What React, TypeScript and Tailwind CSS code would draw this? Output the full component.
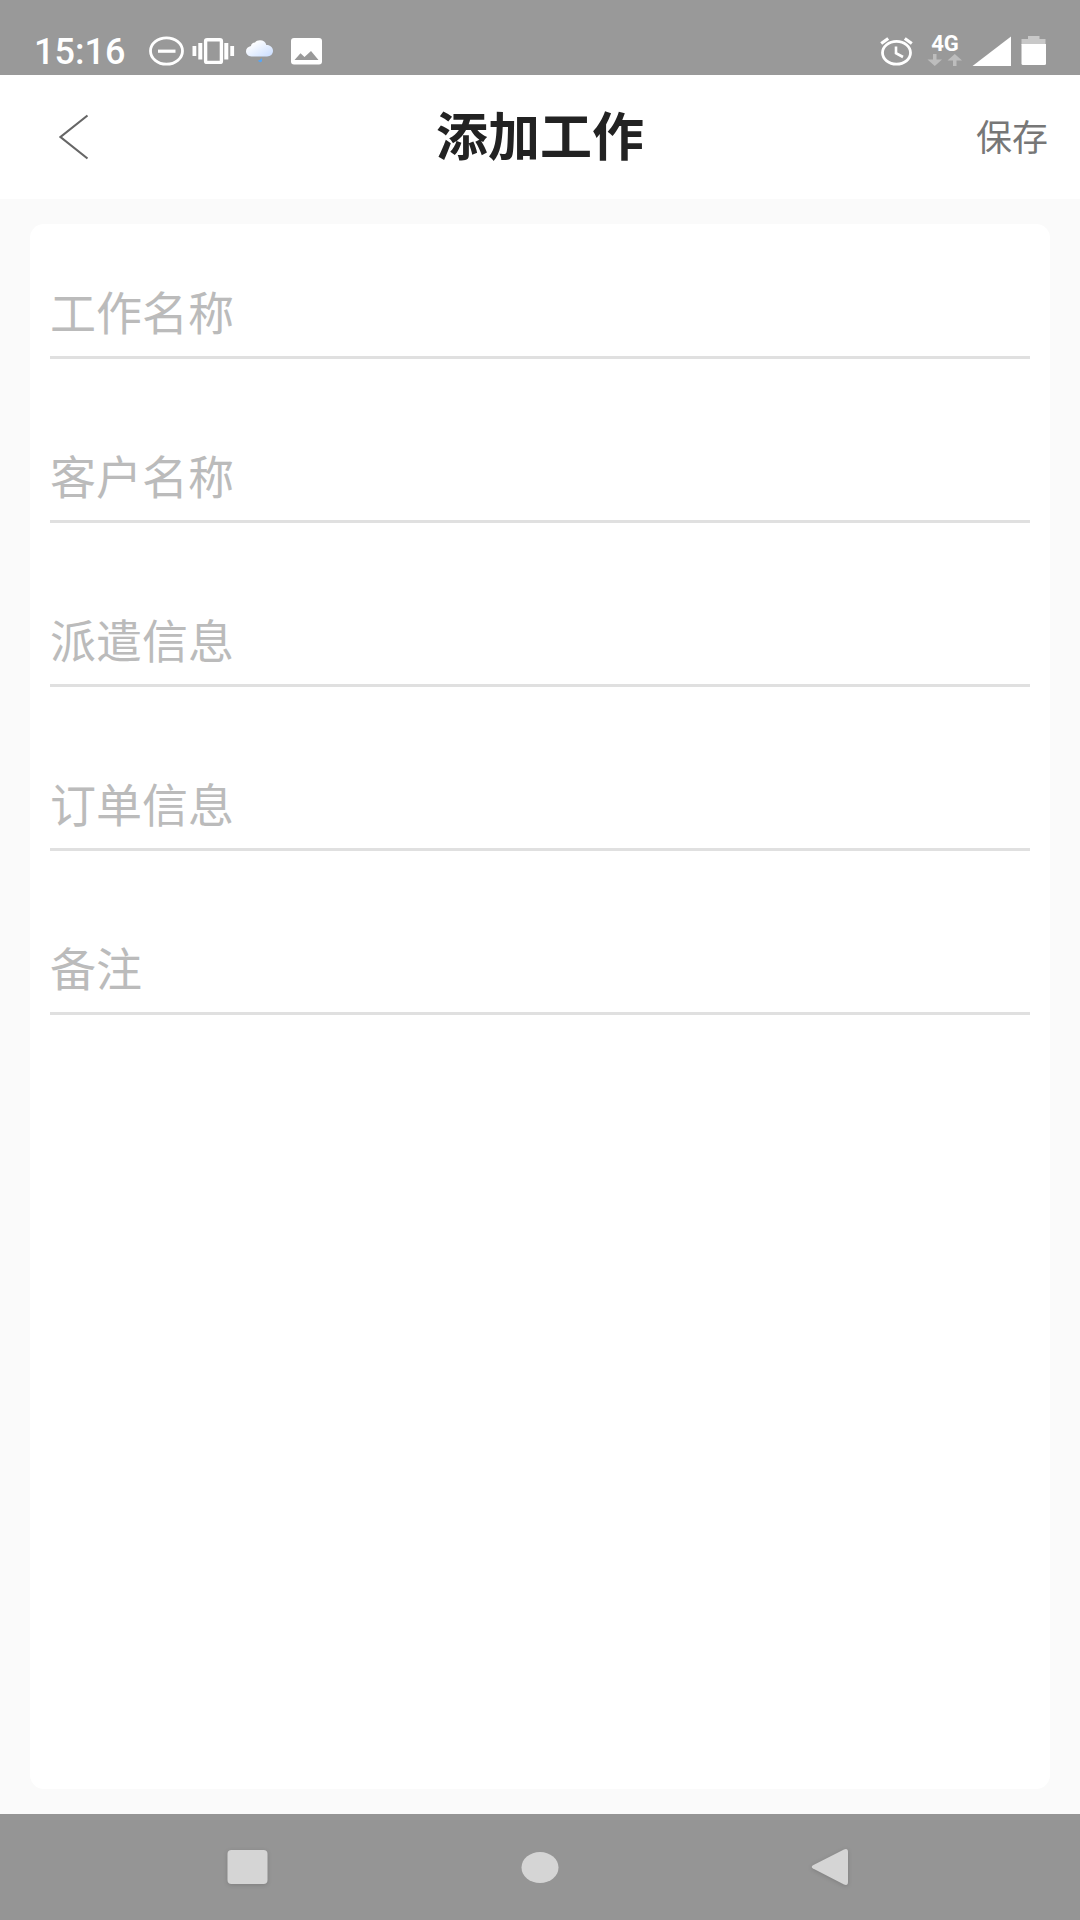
import React, { useState } from "react";

const FIELDS = [
    { id: "jobName", label: "工作名称" },
    { id: "customerName", label: "客户名称" },
    { id: "dispatchInfo", label: "派遣信息" },
    { id: "orderInfo", label: "订单信息" },
    { id: "remark", label: "备注" },
];

const DoNotDisturbIcon = () => (
    <svg width="36" height="30" viewBox="0 0 36 30" fill="none" stroke="white">
        <ellipse cx="17.5" cy="15" rx="16" ry="13.2" strokeWidth="2.8" />
        <path d="M9 15.2H26.5" strokeWidth="3.2" />
    </svg>
);

const VibrateIcon = () => (
    <svg width="44" height="30" viewBox="0 0 44 30" fill="white">
        <rect x="1.5" y="10" width="3.8" height="10" />
        <rect x="7.3" y="7" width="4" height="16.5" />
        <rect x="33.3" y="7" width="4" height="16.5" />
        <rect x="39.3" y="10" width="3.8" height="10" />
        <rect x="14.6" y="3.8" width="15.8" height="22.6" rx="1.5" fill="none" stroke="white" strokeWidth="3.4" />
    </svg>
);

const CloudIcon = () => (
    <svg width="40" height="30" viewBox="0 0 40 30">
        <defs>
            <linearGradient id="cloud" x1="0" y1="0" x2="1" y2="1">
                <stop offset="0.2" stopColor="#ffffff" />
                <stop offset="1" stopColor="#c8dcff" />
            </linearGradient>
        </defs>
        <path
            d="M10.5 20.5C7 20.5 5 18 5 15.3C5 12.5 7.2 10.5 10 10C10.2 7.8 11.800 6.500 14 6.500C15 5 16.800 4.200 19 4.200C22.300 4.200 24.800 6 25.300 9C29 8.800 32 11.300 32 14.800C32 18.200 29.500 20.500 26 20.500Z"
            fill="url(#cloud)"
        />
        <path d="M21 22V25C20.5 26.8 17.8 26.4 17 24.5C18.5 24.200 20 23.500 21 22Z" fill="#56a5f5" />
    </svg>
);

const ImageIcon = () => (
    <svg width="36" height="30" viewBox="0 0 36 30">
        <rect x="4" y="2" width="31" height="26.5" rx="3" fill="white" />
        <path d="M7.5 24L13.5 17.3L17.500 21L24 15L31.500 24Z" fill="#999999" />
    </svg>
);

const AlarmIcon = () => (
    <svg width="38" height="30" viewBox="0 0 38 30" fill="none" stroke="white">
        <ellipse cx="16.5" cy="16.8" rx="14" ry="11.4" strokeWidth="2.8" />
        <path d="M16 10.5V17.2L23 21" strokeWidth="2.6" />
        <path d="M1.2 7.5L8.2 2.5M24.8 2.5L31.8 7.5" strokeWidth="3.2" />
    </svg>
);

const NetworkIcon = () => (
    <div className="flex h-[30px] w-[42px] flex-col items-center justify-between">
        <span className="text-[22px] font-bold leading-4">4G</span>
        <svg width="36" height="12" viewBox="0 0 36 12" fill="#bdbdbd">
            <path d="M6 0H9.5V5.5H15L7.8 12L0.5 5.5H6Z" />
            <path d="M26 12H29.5V6.5H35L27.8 0L20.5 6.5H26Z" />
        </svg>
    </div>
);

const SignalIcon = () => (
    <svg width="40" height="30" viewBox="0 0 40 30">
        <path d="M0.5 30L39 0.5V30Z" fill="white" />
    </svg>
);

const BatteryIcon = () => (
    <svg width="28" height="30" viewBox="0 0 28 30">
        <path d="M10 0H21.5V3H27.5V9H3.5V3H10Z" fill="#c8c8c8" />
        <path d="M3.5 8H28V27.5Q28 29 26.5 29H5Q3.5 29 3.5 27.5Z" fill="white" />
    </svg>
);

const StatusBar = () => (
    <div className="flex h-[75px] items-end justify-between bg-[#999999] px-[34px] pb-[9px] text-white">
        <div className="flex items-center gap-1.5">
            <span className="mr-[18px] pt-[3px] text-[36px] font-medium leading-[27px]">15:16</span>
            <DoNotDisturbIcon />
            <VibrateIcon />
            <CloudIcon />
            <ImageIcon />
        </div>
        <div className="flex items-center gap-1.5">
            <AlarmIcon />
            <NetworkIcon />
            <SignalIcon />
            <BatteryIcon />
        </div>
    </div>
);

const NavBar = () => (
    <nav className="grid h-[106px] grid-cols-3 bg-[#959595] px-[102px]">
        <button type="button" aria-label="最近任务" className="flex items-center justify-center">
            <svg width="42" height="40" viewBox="0 0 42 40" className="drop-shadow-sm">
                <rect x="0.5" y="3" width="40" height="34" rx="4" fill="#d5d5d5" />
            </svg>
        </button>
        <button type="button" aria-label="主屏幕" className="flex items-center justify-center">
            <svg width="42" height="40" viewBox="0 0 42 40">
                <ellipse cx="21" cy="20.5" rx="18.5" ry="15.5" fill="#d5d5d5" />
            </svg>
        </button>
        <button type="button" aria-label="返回" className="flex items-center justify-center">
            <svg width="42" height="40" viewBox="0 0 42 40" className="drop-shadow-sm">
                <path
                    d="M2 21.5Q-0.5 20 2 18.3L33 2.5Q37 1 37 5V35Q37 39 33 37.5Z"
                    fill="#d5d5d5"
                />
            </svg>
        </button>
    </nav>
);

const App = () => {
    const [values, setValues] = useState<Record<string, string>>({});

    return (
        <div className="flex min-h-screen flex-col bg-[#fafafa] font-[Roboto,'Noto_Sans_CJK_SC',sans-serif]">
            <StatusBar />

            <header className="grid h-[124px] grid-cols-3 items-center bg-white px-[32px]">
                <button type="button" aria-label="返回" className="justify-self-start px-[26px] py-4">
                    <svg width="32" height="46" viewBox="0 0 32 46" fill="none" stroke="#666666" strokeWidth="2.2">
                        <path d="M29.5 1.5L2.5 23L29.5 44.5" />
                    </svg>
                </button>
                <h1 className="justify-self-center whitespace-nowrap pt-1 text-[52px] font-bold leading-[60px] text-[#222222]">
                    添加工作
                </h1>
                <button type="submit" form="jobForm" className="justify-self-end pt-1 text-[36px] leading-[48px] text-[#777777]">
                    保存
                </button>
            </header>

            <main className="flex flex-1 flex-col px-[30px] py-[25px]">
                <form
                    id="jobForm"
                    onSubmit={(e) => e.preventDefault()}
                    className="flex flex-1 flex-col gap-[73px] rounded-[14px] bg-white px-5 pt-11"
                >
                    {FIELDS.map((field) => (
                        <input
                            key={field.id}
                            id={field.id}
                            type="text"
                            aria-label={field.label}
                            placeholder={field.label}
                            value={values[field.id] ?? ""}
                            onChange={(e) => setValues({ ...values, [field.id]: e.target.value })}
                            className="block h-[91px] w-full border-b-[3px] border-[#e0e0e0] pt-1 text-[46px] text-[#222222] outline-none placeholder:text-[#bbbbbb]"
                        />
                    ))}
                </form>
            </main>

            <NavBar />
        </div>
    );
};

export default App;
